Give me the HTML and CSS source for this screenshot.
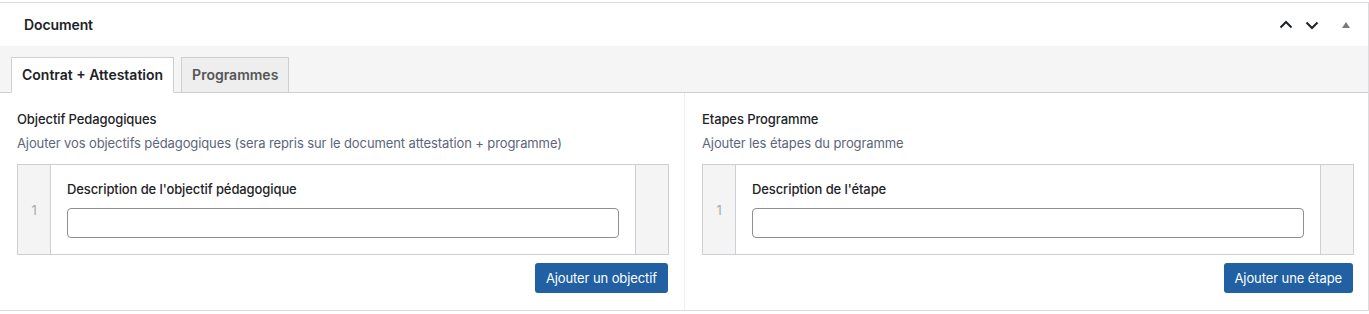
FILE: index.html
```html
<!DOCTYPE html>
<html lang="fr">
<head>
    <meta charset="UTF-8">
    <meta name="viewport" content="width=device-width, initial-scale=1.0">
    <title>Document</title>
    <link rel="stylesheet" href="styles.css">
</head>
<body>
    <div class="postbox">
        <div class="postbox-header">
            <h2 class="hndle">Document</h2>
            <div class="handle-actions">
                <button class="handle-btn" aria-label="Monter">
                    <svg width="16" height="16" viewBox="0 0 16 16"><path d="M2.5 10.5 8 5l5.5 5.5" fill="none" stroke="#1d2327" stroke-width="2"/></svg>
                </button>
                <button class="handle-btn" aria-label="Descendre">
                    <svg width="16" height="16" viewBox="0 0 16 16"><path d="M2.5 5.5 8 11l5.5-5.5" fill="none" stroke="#1d2327" stroke-width="2"/></svg>
                </button>
                <button class="handle-btn toggle" aria-label="Replier">
                    <svg width="10" height="8" viewBox="0 0 10 8"><path d="M1 7 5 1l4 6z" fill="#787c82"/></svg>
                </button>
            </div>
        </div>

        <div class="tab-wrap">
            <ul class="tab-group">
                <li class="tab active">Contrat + Attestation</li>
                <li class="tab">Programmes</li>
            </ul>
        </div>

        <div class="fields">
            <div class="field">
                <div class="field-label">Objectif Pedagogiques</div>
                <p class="description">Ajouter vos objectifs pédagogiques (sera repris sur le document attestation + programme)</p>
                <div class="repeater">
                    <div class="row-order">1</div>
                    <div class="row-fields">
                        <label class="sub-label">Description de l'objectif pédagogique</label>
                        <input type="text" class="text-input">
                    </div>
                    <div class="row-remove"></div>
                </div>
                <div class="actions">
                    <button class="button-primary">Ajouter un objectif</button>
                </div>
            </div>

            <div class="field">
                <div class="field-label">Etapes Programme</div>
                <p class="description">Ajouter les étapes du programme</p>
                <div class="repeater">
                    <div class="row-order">1</div>
                    <div class="row-fields">
                        <label class="sub-label">Description de l'étape</label>
                        <input type="text" class="text-input">
                    </div>
                    <div class="row-remove"></div>
                </div>
                <div class="actions">
                    <button class="button-primary">Ajouter une étape</button>
                </div>
            </div>
        </div>
    </div>
</body>
</html>
```

FILE: styles.css
```css
body {
    margin: 0;
    padding: 2px 0 0 0;
    background-color: #fff;
    font-family: Inter, "Liberation Sans", Arial, sans-serif;
    color: #1d2327;
    font-size: 13px;
    letter-spacing: -0.1px;
}
.postbox {
    margin-left: -1px;
    width: 1368px;
    border: 1px solid #dcdcde;
    background-color: #fff;
}
.postbox-header {
    display: flex;
    align-items: center;
    justify-content: space-between;
    height: 43px;
}
.hndle {
    margin: 0;
    padding-left: 24px;
    font-size: 14px;
    font-weight: 600;
    color: #1d2327;
}
.handle-actions {
    display: flex;
    align-items: center;
    padding-right: 9px;
}
.handle-btn {
    border: none;
    background: none;
    padding: 0;
    width: 26px;
    height: 36px;
    display: flex;
    align-items: center;
    justify-content: center;
    cursor: pointer;
}
.handle-btn.toggle {
    width: 34px;
    padding-left: 8px;
}
.tab-wrap {
    background-color: #f5f5f5;
    border-bottom: 1px solid #ccd0d4;
    padding-top: 11px;
}
.tab-group {
    list-style: none;
    margin: 0 0 -1px 0;
    padding: 0 0 0 11px;
    display: flex;
    gap: 7px;
}
.tab {
    padding: 0 10px;
    height: 34px;
    line-height: 34px;
    font-size: 14px;
    font-weight: 600;
    letter-spacing: 0;
    color: #555;
    background-color: #eee;
    border: 1px solid #ccd0d4;
}
.tab.active {
    background-color: #fff;
    color: #1d2327;
    border-bottom-color: #fff;
}
.fields {
    display: grid;
    grid-template-columns: 684px 1fr;
}
.field {
    padding: 17px 15px 17px 17px;
}
.field + .field {
    border-left: 1px solid #eee;
    padding-right: 14px;
}
.field-label {
    font-weight: 500;
    color: #1d2327;
    line-height: 18px;
}
.description {
    margin: 6px 0 12px 0;
    line-height: 18px;
    color: #5d6679;
}
.repeater {
    display: flex;
    box-sizing: border-box;
    border: 1px solid #ccd0d4;
    height: 91px;
}
.row-order {
    width: 32px;
    background-color: #f4f4f4;
    border-right: 1px solid #ccd0d4;
    color: #aaa;
    display: flex;
    align-items: center;
    justify-content: center;
}
.row-fields {
    flex: 1;
    padding: 15px 16px 0 16px;
}
.sub-label {
    display: block;
    font-weight: 500;
    line-height: 18px;
    margin-bottom: 10px;
}
.text-input {
    display: block;
    box-sizing: border-box;
    width: 100%;
    height: 30px;
    border: 1px solid #8c8f94;
    border-radius: 4px;
    margin: 0;
}
.row-remove {
    width: 32px;
    background-color: #f4f4f4;
    border-left: 1px solid #ccd0d4;
}
.actions {
    display: flex;
    justify-content: flex-end;
    margin-top: 8px;
    padding-right: 1px;
}
.button-primary {
    background-color: #2160a2;
    color: #fff;
    border: none;
    border-radius: 3px;
    height: 30px;
    padding: 0 11px;
    font-family: inherit;
    font-size: 13px;
    letter-spacing: -0.1px;
}
```
